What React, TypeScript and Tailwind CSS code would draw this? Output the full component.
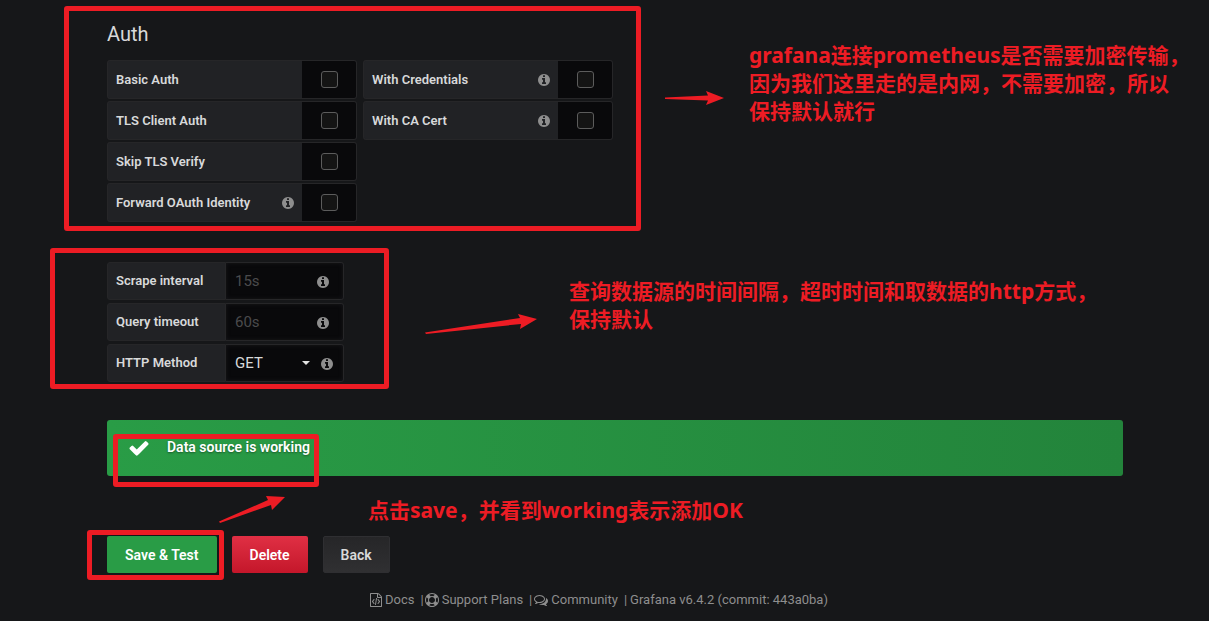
import { useId } from "react";

const ICONS = {
  info: {
    box: "0 128 1536 1536",
    d: "M1024 1376v-160q0-14-9-23t-23-9h-96v-512q0-14-9-23t-23-9h-320q-14 0-23 9t-9 23v160q0 14 9 23t23 9h96v320h-96q-14 0-23 9t-9 23v160q0 14 9 23t23 9h448q14 0 23-9t9-23zm-128-896v-160q0-14-9-23t-23-9h-192q-14 0-23 9t-9 23v160q0 14 9 23t23 9h192q14 0 23-9t9-23zm640 416q0 209-103 385.5t-279.5 279.5-385.5 103-385.5-103-279.5-279.5-103-385.5 103-385.5 279.5-279.5 385.5-103 385.5 103 279.5 279.5 103 385.5z",
  },
  check: {
    box: "0 0 1792 1792",
    d: "M1671 566q0 40-28 68l-724 724-136 136q-28 28-68 28t-68-28l-136-136-362-362q-28-28-28-68t28-68l136-136q28-28 68-28t68 28l294 295 656-657q28-28 68-28t68 28l136 136q28 28 28 68z",
  },
  docs: {
    box: "128 0 1536 1792",
    d: "M1596 380q28 28 48 76t20 88v1152q0 40-28 68t-68 28h-1344q-40 0-68-28t-28-68v-1600q0-40 28-68t68-28h896q40 0 88 20t76 48zm-444-244v376h376q-10-29-22-41l-313-313q-12-12-41-22zm384 1528v-1024h-416q-40 0-68-28t-28-68v-416h-768v1536h1280zm-928-896q8-11 21-12.5t24 6.5l51 38q11 8 12.5 21t-6.5 24l-182 243 182 243q8 11 6.5 24t-12.5 21l-51 38q-11 8-24 6.5t-21-12.5l-226-301q-14-19 0-38zm802 301q14 19 0 38l-226 301q-8 11-21 12.5t-24-6.5l-51-38q-11-8-12.5-21t6.5-24l182-243-182-243q-8-11-6.5-24t12.5-21l51-38q11-8 24-6.5t21 12.5zm-620 461q-13-2-20.5-13t-5.5-24l138-831q2-13 13-20.5t24-5.5l63 10q13 2 20.5 13t5.5 24l-138 831q-2 13-13 20.5t-24 5.5z",
  },
  support: {
    box: "0 0 1792 1792",
    d: "M896 0q182 0 348 71t286 191 191 286 71 348-71 348-191 286-286 191-348 71-348-71-286-191-191-286-71-348 71-348 191-286 286-191 348-71zm0 128q-190 0-361 90l194 194q82-28 167-28t167 28l194-194q-171-90-361-90zm-678 1129l194-194q-28-82-28-167t28-167l-194-194q-90 171-90 361t90 361zm678 407q190 0 361-90l-194-194q-82 28-167 28t-167-28l-194 194q171 90 361 90zm0-384q159 0 271.5-112.5t112.5-271.5-112.5-271.5-271.5-112.5-271.5 112.5-112.5 271.5 112.5 271.5 271.5 112.5zm484-217l194 194q90-171 90-361t-90-361l-194 194q28 82 28 167t-28 167z",
  },
  community: {
    box: "0 0 1792 1792",
    d: "M704 384q-153 0-286 52t-211.5 141-78.5 191q0 82 53 158t149 132l97 56-35 84q34-20 62-39l44-31 53 10q78 14 153 14 153 0 286-52t211.5-141 78.5-191-78.5-191-211.5-141-286-52zm0-128q191 0 353.5 68.5t256.5 186.5 94 257-94 257-256.5 186.5-353.5 68.5q-86 0-176-16-124 88-278 128-36 9-86 16h-3q-11 0-20.5-8t-11.5-21q-1-3-1-6.5t.5-6.5 2-6l2.5-5 3.5-5.5 4-5 4.5-5 4-4.5q5-6 23-25t26-29.5 22.5-29 25-38.5 20.5-44q-124-72-195-177t-71-224q0-139 94-257t256.5-186.5 353.5-68.5zm822 1169q10 24 20.5 44t25 38.5 22.5 29 26 29.5 23 25q1 1 4 4.5t4.5 5 4 5 3.5 5.5l2.5 5 2 6 .5 6.5-1 6.5q-3 14-13 22t-22 7q-50-7-86-16-154-40-278-128-90 16-176 16-271 0-472-132 58 4 88 4 161 0 309-45t264-129q125-92 192-212t67-254q0-77-23-152 129 71 204 178t75 230q0 120-71 224.5t-195 176.5z",
  },
};

function Icon({ name, className }: { name: keyof typeof ICONS; className: string }) {
  return (
    <svg viewBox={ICONS[name].box} fill="currentColor" aria-hidden="true" className={className}>
      <path d={ICONS[name].d} />
    </svg>
  );
}

const LABEL =
  "flex items-center justify-between rounded-l-[3px] border border-[#262628] bg-[#212225] px-2 text-[13px] font-semibold text-[#d8d9da]";
const FIELD =
  "h-full w-full appearance-none rounded-r-[3px] border border-l-0 border-[#262628] bg-[#09090b] px-[9px] text-[15px] text-[#d8d9da] shadow-[inset_0_0_4px_rgba(40,40,44,0.5)] outline-none placeholder:text-[#4b4b4d]";

function SwitchRow({ label, info }: { label: string; info?: boolean }) {
  const id = useId();
  return (
    <div className="flex h-[39px]">
      <label htmlFor={id} className={`${LABEL} w-[195px] border-r-0`}>
        {label}
        {info && <Icon name="info" className="size-3 text-[#8e8e8e]" />}
      </label>
      <div className="flex w-[55px] items-center justify-center rounded-r-[3px] border border-l-0 border-[#262628] bg-[#09090b]">
        <input
          id={id}
          type="checkbox"
          className="size-[17px] appearance-none rounded-[3px] border border-[#5c5c5c] bg-[#141414] checked:bg-[#33b5e5]"
        />
      </div>
    </div>
  );
}

function InputRow({ label, placeholder }: { label: string; placeholder: string }) {
  const id = useId();
  return (
    <div className="flex h-[38px]">
      <label htmlFor={id} className={`${LABEL} w-[119px]`}>
        {label}
      </label>
      <div className="relative w-[118px]">
        <input id={id} placeholder={placeholder} className={FIELD} />
        <Icon name="info" className="absolute top-[14px] right-[15px] size-3 text-[#8e8e8e]" />
      </div>
    </div>
  );
}

function Frame({ className }: { className: string }) {
  return <div className={`pointer-events-none absolute rounded-[3px] border-[5px] border-[#ed1c24] ${className}`} />;
}

const NOTE =
  "absolute font-['Noto_Sans','Noto_Sans_CJK_SC',sans-serif] text-[21px] leading-7 font-bold whitespace-nowrap text-[#ed1c24]";

export default function App() {
  return (
    <div className="relative min-h-screen bg-[#161719] font-[Roboto,sans-serif] text-[#d8d9da]">
      <main className="pt-5 pr-[86px] pl-[107px]">
        <h3 className="mb-3 text-xl leading-7">Auth</h3>
        <div className="flex gap-[6px]">
          <div className="flex flex-col gap-[2px]">
            <SwitchRow label="Basic Auth" />
            <SwitchRow label="TLS Client Auth" />
            <SwitchRow label="Skip TLS Verify" />
            <SwitchRow label="Forward OAuth Identity" info />
          </div>
          <div className="flex flex-col gap-[2px]">
            <SwitchRow label="With Credentials" info />
            <SwitchRow label="With CA Cert" info />
          </div>
        </div>

        <div className="mt-10 flex flex-col gap-[3px]">
          <InputRow label="Scrape interval" placeholder="15s" />
          <InputRow label="Query timeout" placeholder="60s" />
          <div className="flex h-[38px]">
            <label htmlFor="http-method" className={`${LABEL} w-[119px]`}>
              HTTP Method
            </label>
            <div className="relative w-[118px]">
              <select id="http-method" className={FIELD}>
                <option>GET</option>
                <option>POST</option>
              </select>
              <svg viewBox="0 0 8 4" aria-hidden="true" className="pointer-events-none absolute top-[17px] right-[34px] h-1 w-2">
                <path d="M0 0h8L4 4z" fill="#e3e3e3" />
              </svg>
              <Icon name="info" className="absolute top-[14px] right-[11px] size-3 text-[#8e8e8e]" />
            </div>
          </div>
        </div>

        <div
          role="status"
          className="mt-[38px] flex h-14 items-start rounded-[3px] bg-linear-to-r from-[#299c46] to-[#23843b] pt-[17px] pl-[21px] text-white"
        >
          <Icon name="check" className="size-[22px]" />
          <span className="ml-[17px] text-sm font-semibold [text-shadow:0_1px_2px_rgba(0,0,0,0.4)]">
            Data source is working
          </span>
        </div>

        <div className="mt-[60px] flex gap-[15px] text-sm font-semibold">
          <button className="h-[37px] rounded-[2px] bg-[#299c46] px-[18px] text-white">Save &amp; Test</button>
          <button className="h-[37px] rounded-[2px] bg-linear-to-b from-[#e02f44] to-[#c4162a] px-[18px] text-white">
            Delete
          </button>
          <button className="h-[37px] rounded-[2px] border border-[#2f2f32] bg-linear-to-b from-[#262628] to-[#303032] px-[17px]">
            Back
          </button>
        </div>
      </main>

      <footer className="flex items-center justify-center pt-[17px] pr-[11px] text-[13px] leading-5 text-[#8e8e8e]">
        <a href="#docs" className="flex items-center gap-[3px]">
          <Icon name="docs" className="h-[14px] w-3" />
          Docs
        </a>
        <span className="ml-[6px]">|</span>
        <a href="#support" className="ml-[1px] flex items-center gap-[3px]">
          <Icon name="support" className="size-[14px]" />
          Support Plans
        </a>
        <span className="ml-[6px]">|</span>
        <a href="#community" className="ml-[2px] flex items-center gap-[3px]">
          <Icon name="community" className="size-[14px]" />
          Community
        </a>
        <span className="mr-[3px] ml-[6px]">|</span>
        <span>Grafana v6.4.2 (commit: 443a0ba)</span>
      </footer>

      <Frame className="top-[6px] left-[64px] h-[225px] w-[577px]" />
      <Frame className="top-[248px] left-[50px] h-[141px] w-[339px]" />
      <Frame className="top-[434px] left-[113px] h-[53px] w-[206px]" />
      <Frame className="top-[530px] left-[87px] h-[50px] w-[137px]" />

      <svg viewBox="0 0 60 16" className="absolute top-[90px] left-[665px] h-4 w-[60px]" aria-hidden="true">
        <path d="M0 7.5L43 5.5L41 1L59 8L41 15L43 10.5L0 9z" fill="#ed1c24" />
      </svg>
      <svg viewBox="0 0 114 24" className="absolute top-[312px] left-[425px] h-6 w-[114px]" aria-hidden="true">
        <path d="M0 20.5L95 6L93 2L112 7L95 17L96 12L1 22z" fill="#ed1c24" />
      </svg>
      <svg viewBox="0 0 68 28" className="absolute top-[495px] left-[219px] h-7 w-[68px]" aria-hidden="true">
        <path d="M0 26.5L49 5L47 1L66 2L53 15L52 10L1 28z" fill="#ed1c24" />
      </svg>

      <p className={`${NOTE} top-[41px] left-[749px]`}>
        grafana连接prometheus是否需要加密传输，
        <br />
        因为我们这里走的是内网，不需要加密，所以
        <br />
        保持默认就行
      </p>
      <p className={`${NOTE} top-[277px] left-[569px]`}>
        查询数据源的时间间隔，超时时间和取数据的http方式，
        <br />
        保持默认
      </p>
      <p className={`${NOTE} top-[496px] left-[368px]`}>点击save，并看到working表示添加OK</p>
    </div>
  );
}
